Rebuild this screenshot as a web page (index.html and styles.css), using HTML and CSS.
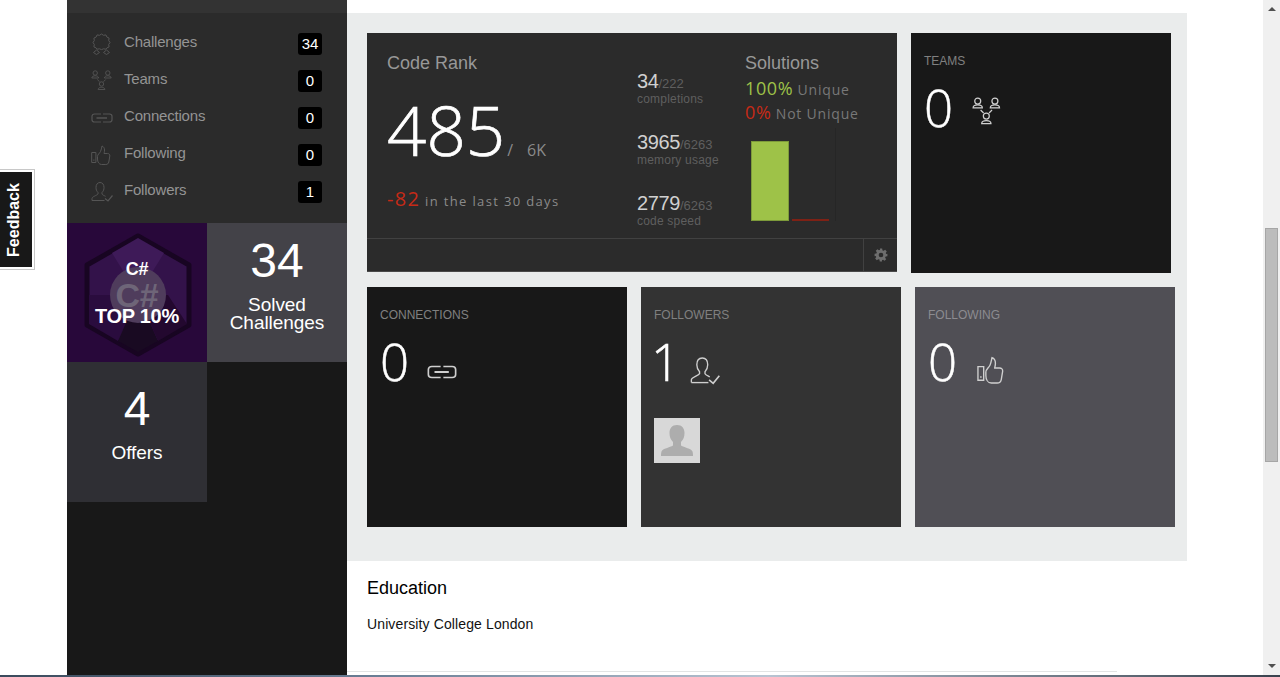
FILE: index.html
```html
<!DOCTYPE html>
<html lang="en">
<head>
  <meta charset="UTF-8" />
  <title>Profile</title>
  <link rel="stylesheet" href="styles.css">
</head>
<body>

  <!-- Feedback tab -->
  <a class="feedback" href="#"><span>Feedback</span></a>

  <div class="page">

    <!-- Sidebar -->
    <aside class="sidebar">
      <div class="sidebar-top"></div>
      <nav class="side-nav">
        <a href="#">
          <svg class="side-icon" viewBox="0 0 22 22"><use href="#i-award"/></svg>
          <span class="side-label">Challenges</span><span class="count">34</span>
        </a>
        <a href="#">
          <svg class="side-icon" viewBox="0 0 22 22"><use href="#i-teams"/></svg>
          <span class="side-label">Teams</span><span class="count">0</span>
        </a>
        <a href="#">
          <svg class="side-icon" viewBox="0 0 22 22"><use href="#i-link"/></svg>
          <span class="side-label">Connections</span><span class="count">0</span>
        </a>
        <a href="#">
          <svg class="side-icon" viewBox="0 0 22 22"><use href="#i-thumb"/></svg>
          <span class="side-label">Following</span><span class="count">0</span>
        </a>
        <a href="#">
          <svg class="side-icon" viewBox="0 0 22 22"><use href="#i-follow"/></svg>
          <span class="side-label">Followers</span><span class="count">1</span>
        </a>
      </nav>
      <div class="tiles">
        <div class="tile tile-badge">
          <svg class="hex" viewBox="0 0 108 124">
            <polygon points="54,3 105,32 105,92 54,121 3,92 3,32" fill="#33124a" stroke="#180522" stroke-width="5" stroke-linejoin="round"/>
            <polygon points="54,5 28,20 54,62 80,20" fill="#3e1a58"/>
            <polygon points="54,62 5,62 5,91 34,108" fill="#2a0c3e"/>
            <polygon points="54,62 34,108 54,119 74,108" fill="#190a22"/>
            <polygon points="54,62 74,108 103,91 84,62" fill="#23082f"/>
            <circle cx="54" cy="62" r="28" fill="#4f3c5c"/>
          </svg>
          <span class="hex-mark">C#</span>
          <span class="hex-title">C#</span>
          <span class="hex-rank">TOP 10%</span>
        </div>
        <div class="tile tile-solved">
          <div class="tile-num">34</div>
          <div class="tile-text">Solved<br>Challenges</div>
        </div>
        <div class="tile tile-offers">
          <div class="tile-num">4</div>
          <div class="tile-text">Offers</div>
        </div>
      </div>
    </aside>

    <!-- Main Content -->
    <main class="main">
      <section class="stats">
        <div class="stats-row">

          <div class="rank-card">
            <div class="rank-body">
              <div class="rank-col">
                <h3 class="card-title">Code Rank</h3>
                <div class="rank-value">485<span class="rank-of">/</span><span class="rank-total">6K</span></div>
                <div class="rank-change"><b>-82</b> in the last 30 days</div>
              </div>
              <div class="metrics">
                <div class="metric"><b>34</b><i>/222</i><span>completions</span></div>
                <div class="metric"><b>3965</b><i>/6263</i><span>memory usage</span></div>
                <div class="metric"><b>2779</b><i>/6263</i><span>code speed</span></div>
              </div>
              <div class="solutions">
                <h3 class="card-title">Solutions</h3>
                <div class="sol-line"><b class="green">100%</b> Unique</div>
                <div class="sol-line"><b class="red">0%</b> Not Unique</div>
                <div class="chart">
                  <div class="bar bar-green"></div>
                  <div class="bar bar-red"></div>
                </div>
              </div>
            </div>
            <div class="rank-foot">
              <div class="gear-cell">
                <svg class="gear" viewBox="0 0 24 24"><path d="M10 1h4l.6 3.1 1.9.8 2.6-1.8 2.8 2.8-1.8 2.6.8 1.9L23 10v4l-3.1.6-.8 1.9 1.8 2.6-2.8 2.8-2.6-1.8-1.9.8L13.9 23h-4l-.6-3.1-1.9-.8-2.6 1.8-2.8-2.8 1.8-2.6-.8-1.9L1 14v-4l3.1-.6.8-1.9-1.8-2.6 2.8-2.8 2.6 1.8 1.9-.8zM12 8a4 4 0 1 0 0 8 4 4 0 0 0 0-8z" fill-rule="evenodd"/></svg>
              </div>
            </div>
          </div>

          <div class="card card-black">
            <div class="card-label">TEAMS</div>
            <div class="card-count">0
              <svg class="card-icon icon-teams" viewBox="0 0 22 22"><use href="#i-teams"/></svg>
            </div>
          </div>

        </div>
        <div class="stats-row">

          <div class="card card-black">
            <div class="card-label">CONNECTIONS</div>
            <div class="card-count">0
              <svg class="card-icon icon-link" viewBox="0 0 22 22"><use href="#i-link"/></svg>
            </div>
          </div>

          <div class="card card-grey">
            <div class="card-label">FOLLOWERS</div>
            <div class="card-count count-one">1
              <svg class="card-icon icon-follow" viewBox="0 0 22 22"><use href="#i-follow"/></svg>
            </div>
            <div class="avatar">
              <svg viewBox="0 0 46 45"><path d="M23 7c-5 0-7.500 3.500-7.500 8 0 3.500 1 6.500 3.500 9v3.500c-3 2-10.500 3-11.500 6-.5 1.500-.5 3.500-.5 4.500h32c0-1 0-3-.5-4.500-1-3-8.500-4-11.500-6V24c2.500-2.500 3.500-5.500 3.500-9 0-4.500-2.500-8-7.500-8z" fill="#adadad"/></svg>
            </div>
          </div>

          <div class="card card-slate">
            <div class="card-label">FOLLOWING</div>
            <div class="card-count">0
              <svg class="card-icon icon-thumb" viewBox="0 0 22 22"><use href="#i-thumb"/></svg>
            </div>
          </div>

        </div>
      </section>

      <section class="education">
        <h2>Education</h2>
        <p>University College London</p>
      </section>
      <hr class="rule">
    </main>

    <div class="page-fill"></div>

    <!-- Scrollbar -->
    <div class="scrollbar">
      <div class="arrow-up"></div>
      <div class="thumb"></div>
      <div class="arrow-down"></div>
    </div>
  </div>

  <div class="taskbar"></div>

  <!-- Icon set -->
  <svg class="icon-defs" width="0" height="0">
    <defs>
      <g id="i-award" fill="none" stroke="currentColor" stroke-width="1">
        <path d="M10.500 1l2 1.300 2.400-.4 1 2.200 2.200 1-.4 2.400 1.300 2-1.300 2 .4 2.400-2.200 1-1 1.300-2.400-.4-2 .8-2-.8-2.400.4-1-1.300-2.200-1 .4-2.400-1.300-2 1.300-2-.4-2.400 2.200-1 1-2.200 2.400.4z"/>
        <path d="M2.500 19.500l3-2.500 3 2.500-3 2zM12.500 19.500l3-2.500 3 2.500-3 2z"/>
      </g>
      <g id="i-teams" fill="none" stroke="currentColor" stroke-width=".9">
        <circle cx="4.200" cy="3" r="2.200"/>
        <path d="M.8 8c0-1.600 2-2.200 3.400-2.200S7.600 6.400 7.600 8z"/>
        <circle cx="16.800" cy="3" r="2.200"/>
        <path d="M13.400 8c0-1.600 2-2.200 3.400-2.200s3.400.6 3.400 2.200z"/>
        <circle cx="10.500" cy="14" r="2.200"/>
        <path d="M7.100 19.500c0-1.600 2-2.200 3.400-2.200s3.400.6 3.400 2.200z"/>
        <path d="M6.300 9.500l2.200 2.200M14.700 9.500l-2.200 2.200"/>
      </g>
      <g id="i-link" fill="none" stroke="currentColor" stroke-width="1.200">
        <path d="M10 7H3.500C2 7 1 8 1 9.200v3.600C1 14 2 15 3.500 15H10M12 7h6.500C20 7 21 8 21 9.200v3.600c0 1.200-1 2.200-2.500 2.200H12"/>
        <path d="M5.500 11h10.500" stroke-width="1.500"/>
      </g>
      <g id="i-thumb" fill="none" stroke="currentColor" stroke-width="1">
        <path d="M.7 8.500h4.200v10H.7z"/>
        <path d="M2.300 15.500h1.100v1.200H2.300z" fill="currentColor" stroke="none"/>
        <path d="M6.500 12.500c0-2 2-3 3-5 .8-1.500 1-3.500 1.500-5.500 1.500.5 2.500 2 2.500 4s-.5 3-.5 3.500h3.500c1.500 0 2.500 1 2.300 2.500l-1 6c-.3 1.500-1.300 2.500-3 2.500h-4.300c-2.500 0-4-2.500-4-5.500z"/>
      </g>
      <g id="i-follow" fill="none" stroke="currentColor" stroke-width="1">
        <path d="M1 19.500v-2c0-2 5-3 6-4.500v-1.500C5.500 10 5 8.500 5 6.500 5 3.500 6.500 1.500 9 1.500s4 2 4 5c0 2-.5 3.500-2 5V13c.5 1 2 1.500 3.500 2.300"/>
        <path d="M1 19.500h12.500"/>
        <path d="M14 17.500l3 2.500 4.500-5.500" stroke-width="1.200"/>
      </g>
    </defs>
  </svg>

</body>
</html>
```

FILE: styles.css
```css
/* General Styling */
html, body {
  margin: 0;
  padding: 0;
  height: 677px;
  overflow: hidden;
}

body {
  position: relative;
  font-family: "Liberation Sans", Arial, sans-serif;
  background: #fff;
}

.icon-defs {
  position: absolute;
}

.page {
  display: flex;
  height: 675px;
  padding-left: 67px;
}

/* Feedback tab */
.feedback {
  position: absolute;
  left: 0;
  top: 170px;
  width: 28px;
  height: 95px;
  display: flex;
  align-items: center;
  justify-content: center;
  padding-right: 4px;
  background: #181818;
  border: 2px solid #fff;
  border-left: none;
  box-shadow: 0 0 0 1px #c8c8c8;
  color: #fff;
  font-size: 16px;
  font-weight: bold;
  text-decoration: none;
}

.feedback span {
  transform: rotate(-90deg);
}

/* Sidebar */
.sidebar {
  width: 280px;
  flex: none;
  background: #181818;
}

.sidebar-top {
  height: 13px;
  background: #333;
}

.side-nav {
  height: 210px;
  box-sizing: border-box;
  padding: 20px 25px 0 24px;
  background: #2b2b2b;
}

.side-nav a {
  display: flex;
  align-items: center;
  height: 22px;
  margin-bottom: 15px;
  color: #949494;
  font-size: 15px;
  text-decoration: none;
}

.side-icon {
  width: 22px;
  height: 22px;
  margin-right: 11px;
  color: #555;
  flex: none;
}

.side-label {
  flex: 1;
  margin-top: -6px;
  letter-spacing: -0.2px;
}

.count {
  width: 24px;
  height: 22px;
  line-height: 22px;
  border-radius: 3px;
  background: #000;
  color: #fff;
  font-size: 15px;
  text-align: center;
}

.tiles {
  display: grid;
  grid-template-columns: 140px 140px;
  grid-template-rows: 139px 140px;
}

.tile {
  position: relative;
  color: #fff;
  text-align: center;
}

.tile-badge {
  background: #28083a;
}

.hex {
  position: absolute;
  left: 17px;
  top: 10px;
  width: 108px;
  height: 124px;
}

.hex-mark,
.hex-title,
.hex-rank {
  position: absolute;
  left: 0;
  width: 140px;
  font-weight: bold;
  letter-spacing: -0.3px;
}

.hex-mark {
  top: 60px;
  color: #6e6578;
  font-size: 34px;
  line-height: 24px;
}

.hex-title {
  top: 38px;
  font-size: 18px;
  line-height: 16px;
}

.hex-rank {
  top: 84px;
  font-size: 20px;
  line-height: 18px;
}

.tile-solved {
  background: #434248;
}

.tile-offers {
  background: #2f2f34;
}

.tile-num {
  padding-top: 9px;
  font-size: 48px;
  line-height: 58px;
}

.tile-text {
  margin-top: 6px;
  font-size: 19px;
  line-height: 18px;
  letter-spacing: -0.05px;
}

.tile-offers .tile-num {
  padding-top: 18px;
}

.tile-offers .tile-text {
  margin-top: 6px;
}

/* Main Content */
.main {
  width: 840px;
  flex: none;
  padding-top: 13px;
}

.stats {
  display: flex;
  flex-direction: column;
  gap: 14px;
  height: 548px;
  box-sizing: border-box;
  padding: 20px 0 0 20px;
  background: #eaecec;
}

.stats-row {
  display: flex;
  gap: 14px;
}

.card {
  position: relative;
  width: 260px;
  height: 240px;
  box-sizing: border-box;
  padding: 21px 13px;
  color: #fff;
}

.card-black {
  background: #181818;
}

.card-grey {
  background: #333;
}

.card-slate {
  background: #504f55;
}

.card-label {
  color: #808080;
  font-size: 12px;
  line-height: 15px;
}

.card-slate .card-label {
  color: #8c8b90;
}

.card-count {
  display: flex;
  margin-top: 7px;
  font-family: "Open Sans", sans-serif;
  font-size: 51px;
  font-weight: 300;
  line-height: 62px;
  -webkit-text-stroke: 0.5px #fff;
}

.count-one {
  text-indent: -3px;
}

.card-icon {
  width: 30px;
  height: 30px;
  margin-left: 18px;
  color: #cfcfcf;
}

.icon-teams {
  margin-top: 21px;
  margin-left: 19px;
}

.icon-link {
  margin-top: 27px;
}

.icon-follow {
  margin-top: 26px;
  margin-left: 10px;
}

.icon-thumb {
  margin-top: 25px;
  margin-left: 20px;
}

.avatar {
  width: 46px;
  height: 45px;
  margin-top: 26px;
  background: #d8d8d8;
}

.avatar svg {
  display: block;
}

/* Code rank card */
.rank-card {
  width: 530px;
  height: 239px;
  box-sizing: border-box;
  display: flex;
  flex-direction: column;
  background: #2b2b2b;
  border-bottom: 1px solid #4a4a4a;
  color: #8c8c8c;
}

.rank-body {
  display: flex;
  height: 205px;
  flex: none;
  border-bottom: 1px solid #414141;
}

.rank-col {
  width: 250px;
  padding: 19px 0 0 20px;
}

.card-title {
  margin: 0;
  color: #989898;
  font-size: 18px;
  font-weight: normal;
  line-height: 22px;
}

.rank-value {
  margin-top: 17px;
  color: #fff;
  font-family: "Open Sans", sans-serif;
  font-size: 69px;
  font-weight: 300;
  line-height: 76px;
  -webkit-text-stroke: 0.7px #fff;
}

.rank-of,
.rank-total {
  color: #8a8a8a;
  font-size: 16px;
  font-weight: 400;
  -webkit-text-stroke: 0;
}

.rank-of {
  margin-left: 2px;
}

.rank-total {
  margin-left: 14px;
}

.rank-change {
  margin-top: -3px;
  color: #8a8a8a;
  font-family: "Open Sans", sans-serif;
  font-size: 13px;
  letter-spacing: 1.35px;
}

.rank-change b {
  color: #c62a17;
  font-size: 20px;
  font-weight: 400;
}

.metrics {
  width: 108px;
  padding-top: 41px;
}

.metric {
  height: 61px;
  font-size: 13px;
  line-height: 15px;
}

.metric b {
  color: #d0d0d0;
  font-size: 20px;
  font-weight: normal;
  letter-spacing: -0.4px;
}

.metric i {
  color: #5f5f5f;
  font-style: normal;
}

.metric span {
  display: block;
  margin-top: 2px;
  color: #5f5f5f;
  font-size: 12px;
  line-height: 13px;
  letter-spacing: 0.2px;
}

.solutions {
  flex: 1;
  padding-top: 19px;
}

.sol-line {
  margin-top: 4px;
  color: #787878;
  font-family: "Open Sans", sans-serif;
  font-size: 14px;
  line-height: 20px;
  letter-spacing: 0.8px;
}

.sol-line + .sol-line {
  margin-top: 2px;
}

.sol-line b {
  font-size: 18px;
  font-weight: 400;
  letter-spacing: 0.6px;
}

.green {
  color: #9ec248;
}

.red {
  color: #c62a17;
}

.chart {
  display: flex;
  align-items: flex-end;
  gap: 3px;
  width: 84px;
  height: 93px;
  margin-top: 4px;
  padding-left: 6px;
  border-right: 1px solid #262626;
}

.bar {
  width: 37px;
}

.bar-green {
  width: 38px;
  height: 80px;
  background: #9ec248;
  border: 1px solid #7d9a3a;
  box-sizing: border-box;
}

.bar-red {
  height: 2px;
  background: #7e2115;
}

.rank-foot {
  display: flex;
  flex: 1;
  justify-content: flex-end;
}

.gear-cell {
  display: flex;
  align-items: center;
  justify-content: center;
  width: 33px;
  border-left: 1px solid #414141;
}

.gear {
  width: 14px;
  height: 14px;
  fill: #6e6e6e;
}

/* Education */
.education {
  padding: 17px 20px 0;
}

.education h2 {
  margin: 0;
  color: #000;
  font-size: 18px;
  font-weight: normal;
  line-height: 20px;
}

.education p {
  margin: 17px 0 0;
  color: #111;
  font-size: 14px;
  line-height: 18px;
  letter-spacing: 0.12px;
}

.rule {
  width: 770px;
  height: 1px;
  margin: 38px 0 0;
  border: none;
  background: #e2e4e4;
}

.page-fill {
  flex: 1;
}

/* Scrollbar */
.scrollbar {
  position: relative;
  width: 17px;
  flex: none;
  background: #f0f0f0;
}

.thumb {
  position: absolute;
  left: 2px;
  right: 2px;
  top: 228px;
  height: 234px;
  background: #bcbcbc;
  border: 1px solid #a6a6a6;
  box-sizing: border-box;
}

.arrow-up,
.arrow-down {
  position: absolute;
  left: 5px;
  width: 0;
  height: 0;
  border-left: 4px solid transparent;
  border-right: 4px solid transparent;
}

.arrow-up {
  top: 7px;
  border-bottom: 4px solid #505050;
}

.arrow-down {
  bottom: 7px;
  border-top: 4px solid #505050;
}

.taskbar {
  height: 2px;
  background: linear-gradient(90deg, #3a4a5c, #6b7f96 30%, #b8c4d2 60%, #39424e);
}
```
